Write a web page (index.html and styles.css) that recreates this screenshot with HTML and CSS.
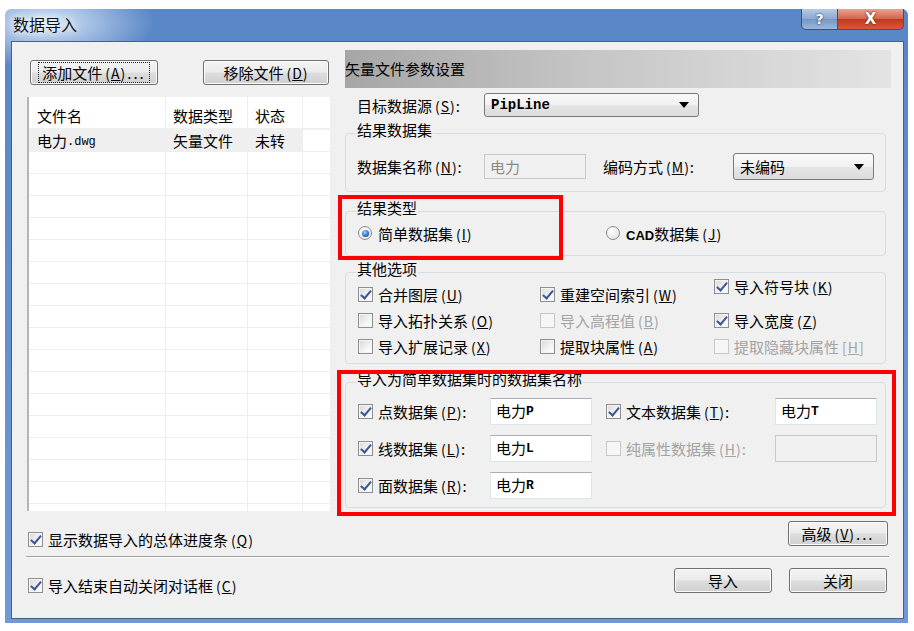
FILE: index.html
```html
<!DOCTYPE html>
<html lang="zh-CN">
    <head>
        <meta charset="UTF-8">
        <meta name="viewport" content="width=device-width, initial-scale=1.0">
        <title>数据导入</title>

        <link rel="stylesheet" href="styles.css">
    </head>
    <body>

        <div class="window">
            <div class="titlebar">
                <span class="title">数据导入</span>
                <div class="caption-btns">
                    <span class="cap-btn help">?</span>
                    <span class="cap-btn close">X</span>
                </div>
            </div>

            <div class="client">
                <div class="top">

                    <!-- file list -->
                    <div class="left-col">
                        <div class="file-btns">
                            <button class="btn add"><span class="focus-rect">添加文件<span class="mn">(<u>A</u>)</span><span class="dots">...</span></span></button>
                            <button class="btn remove">移除文件<span class="mn">(<u>D</u>)</span></button>
                        </div>

                        <div class="file-list">
                            <div class="row head"><span class="c1">文件名</span><span class="c2">数据类型</span><span class="c3">状态</span><span class="c4"></span></div>
                            <div class="row sel"><span class="c1">电力<span class="ext">.dwg</span></span><span class="c2">矢量文件</span><span class="c3">未转</span><span class="c4"></span></div>
                            <div class="row"><span class="c1"></span><span class="c2"></span><span class="c3"></span><span class="c4"></span></div>
                            <div class="row"><span class="c1"></span><span class="c2"></span><span class="c3"></span><span class="c4"></span></div>
                            <div class="row"><span class="c1"></span><span class="c2"></span><span class="c3"></span><span class="c4"></span></div>
                            <div class="row"><span class="c1"></span><span class="c2"></span><span class="c3"></span><span class="c4"></span></div>
                            <div class="row"><span class="c1"></span><span class="c2"></span><span class="c3"></span><span class="c4"></span></div>
                            <div class="row"><span class="c1"></span><span class="c2"></span><span class="c3"></span><span class="c4"></span></div>
                            <div class="row"><span class="c1"></span><span class="c2"></span><span class="c3"></span><span class="c4"></span></div>
                            <div class="row"><span class="c1"></span><span class="c2"></span><span class="c3"></span><span class="c4"></span></div>
                            <div class="row"><span class="c1"></span><span class="c2"></span><span class="c3"></span><span class="c4"></span></div>
                            <div class="row"><span class="c1"></span><span class="c2"></span><span class="c3"></span><span class="c4"></span></div>
                            <div class="row"><span class="c1"></span><span class="c2"></span><span class="c3"></span><span class="c4"></span></div>
                            <div class="row"><span class="c1"></span><span class="c2"></span><span class="c3"></span><span class="c4"></span></div>
                            <div class="row"><span class="c1"></span><span class="c2"></span><span class="c3"></span><span class="c4"></span></div>
                            <div class="row"><span class="c1"></span><span class="c2"></span><span class="c3"></span><span class="c4"></span></div>
                            <div class="row"><span class="c1"></span><span class="c2"></span><span class="c3"></span><span class="c4"></span></div>
                            <div class="row"><span class="c1"></span><span class="c2"></span><span class="c3"></span><span class="c4"></span></div>
                            <div class="row"><span class="c1"></span><span class="c2"></span><span class="c3"></span><span class="c4"></span></div>
                        </div>
                    </div>

                    <!-- settings -->
                    <div class="right-col">
                        <div class="band">矢量文件参数设置</div>

                        <div class="target-row">
                            <label class="lbl w127">目标数据源<span class="mn">(<u>S</u>)</span>:</label>
                            <div class="combo target-combo"><span class="mono">PipLine</span><span class="arrow"></span></div>
                        </div>

                        <fieldset class="group g1">
                            <legend>结果数据集</legend>
                            <div class="g1-row">
                                <label class="lbl w127">数据集名称<span class="mn">(<u>N</u>)</span>:</label>
                                <div class="input disabled">电力</div>
                                <label class="lbl enc-lbl">编码方式<span class="mn">(<u>M</u>)</span>:</label>
                                <div class="combo enc-combo"><span>未编码</span><span class="arrow"></span></div>
                            </div>
                        </fieldset>

                        <fieldset class="group g2">
                            <legend>结果类型</legend>
                            <div class="radio-row">
                                <label class="opt"><span class="radio on"></span><span>简单数据集<span class="mn">(<u>I</u>)</span></span></label>
                                <label class="opt"><span class="radio"></span><span><span class="cad">CAD</span>数据集<span class="mn">(<u>J</u>)</span></span></label>
                            </div>
                        </fieldset>

                        <fieldset class="group g3">
                            <legend>其他选项</legend>
                            <div class="opt-grid">
                                <label class="opt"><span class="cb on"></span><span>合并图层<span class="mn">(<u>U</u>)</span></span></label>
                                <label class="opt"><span class="cb on"></span><span>重建空间索引<span class="mn">(<u>W</u>)</span></span></label>
                                <label class="opt raised"><span class="cb on"></span><span>导入符号块<span class="mn">(<u>K</u>)</span></span></label>
                                <label class="opt"><span class="cb"></span><span>导入拓扑关系<span class="mn">(<u>O</u>)</span></span></label>
                                <label class="opt off"><span class="cb"></span><span>导入高程值<span class="mn">(<u>B</u>)</span></span></label>
                                <label class="opt"><span class="cb on"></span><span>导入宽度<span class="mn">(<u>Z</u>)</span></span></label>
                                <label class="opt"><span class="cb"></span><span>导入扩展记录<span class="mn">(<u>X</u>)</span></span></label>
                                <label class="opt"><span class="cb"></span><span>提取块属性<span class="mn">(<u>A</u>)</span></span></label>
                                <label class="opt off"><span class="cb"></span><span>提取隐藏块属性<span class="mn">[<u>H</u>]</span></span></label>
                            </div>
                        </fieldset>

                        <fieldset class="group g4">
                            <legend>导入为简单数据集时的数据集名称</legend>
                            <div class="name-grid">
                                <label class="opt"><span class="cb on"></span><span>点数据集<span class="mn">(<u>P</u>)</span>:</span></label>
                                <div class="input">电力<span class="latin">P</span></div>
                                <label class="opt"><span class="cb on"></span><span>文本数据集<span class="mn">(<u>T</u>)</span>:</span></label>
                                <div class="input">电力<span class="latin">T</span></div>

                                <label class="opt"><span class="cb on"></span><span>线数据集<span class="mn">(<u>L</u>)</span>:</span></label>
                                <div class="input">电力<span class="latin">L</span></div>
                                <label class="opt off"><span class="cb"></span><span>纯属性数据集<span class="mn">(<u>H</u>)</span>:</span></label>
                                <div class="input disabled"></div>

                                <label class="opt"><span class="cb on"></span><span>面数据集<span class="mn">(<u>R</u>)</span>:</span></label>
                                <div class="input">电力<span class="latin">R</span></div>
                            </div>
                        </fieldset>

                        <!-- highlight marks -->
                        <div class="redbox rb1"></div>
                        <div class="redbox rb2"></div>
                    </div>
                </div>

                <div class="bottom-row first">
                    <label class="opt"><span class="cb on"></span><span>显示数据导入的总体进度条<span class="mn">(<u>Q</u>)</span></span></label>
                    <button class="btn adv">高级<span class="mn">(<u>V</u>)</span><span class="dots">...</span></button>
                </div>

                <div class="separator"></div>

                <div class="bottom-row second">
                    <label class="opt"><span class="cb on"></span><span>导入结束自动关闭对话框<span class="mn">(<u>C</u>)</span></span></label>
                    <div class="actions">
                        <button class="btn act">导入</button>
                        <button class="btn act">关闭</button>
                    </div>
                </div>
            </div>
        </div>

    </body>
</html>
```

FILE: styles.css
```css
html, body{
    margin: 0;
    padding: 0;
    background: #fff;
    font-family: "Noto Sans CJK SC", "Noto Sans", sans-serif;
    font-size: 15px;
    color: #000;
}

label{
    cursor: default;
}

/* window frame */

.window{
    box-sizing: border-box;
    width: 903px;
    height: 614px;
    margin: 9px 0 0 5px;
    padding: 0 4px 4px 6px;
    display: flex;
    flex-direction: column;
    background:
        radial-gradient(ellipse 110px 45px at 40px 14px, rgba(225,237,250,.95), rgba(225,237,250,0)),
        linear-gradient(to bottom, #5a87c7 0, #5a87c7 40px, #6f9ad6 100%);
    border-radius: 6px 6px 0 0;
}

.titlebar{
    height: 32px;
    display: flex;
    align-items: flex-start;
}

.title{
    margin: 4px 0 0 2px;
    font-size: 16px;
    line-height: 22px;
    color: #111;
    text-shadow: 0 0 6px #fff, 0 0 10px rgba(255,255,255,.8);
}

.caption-btns{
    margin-left: auto;
    display: flex;
}

.cap-btn{
    box-sizing: border-box;
    height: 21px;
    display: flex;
    justify-content: center;
    align-items: center;
    font-family: "DejaVu Sans", sans-serif;
    font-weight: bold;
    color: #fff;
    border: 1px solid #3a5479;
    border-top: none;
}

.cap-btn.help{
    width: 37px;
    font-size: 14px;
    border-radius: 0 0 0 5px;
    background: linear-gradient(to bottom, #b7cbe4, #8aa8d0 50%, #7597c4 51%, #9bb6db);
    text-shadow: 0 0 2px #2a3d5c, 0 0 1px #2a3d5c;
}

.cap-btn.close{
    width: 66px;
    font-size: 15px;
    border-left: none;
    border-radius: 0 0 5px 0;
    background: linear-gradient(to bottom, #e8a493, #d0644b 50%, #c2391d 51%, #d9583a);
    text-shadow: 0 0 2px #5a1a0c, 0 0 1px #5a1a0c;
}

.client{
    flex: 1;
    border: 1px solid #4c607e;
    background: #f0f0f0;
}

.top{
    display: flex;
    height: 473px;
}

/* left column */

.left-col{
    padding-left: 15px;
}

.file-btns{
    display: flex;
    padding-top: 18px;
}

.btn{
    box-sizing: border-box;
    height: 25px;
    padding: 0;
    font-family: "Noto Sans CJK SC", "Noto Sans", sans-serif;
    font-size: 15px;
    color: #000;
    border: 1px solid #707070;
    border-radius: 3px;
    background: linear-gradient(to bottom, #f4f4f4 0, #ebebeb 48%, #dddddd 52%, #d0d0d0 100%);
    box-shadow: inset 0 0 0 1px #fbfbfb;
    display: flex;
    justify-content: center;
    align-items: center;
}

.btn.add{
    width: 128px;
    margin-left: 3px;
}

.focus-rect{
    display: flex;
    align-items: center;
    height: 19px;
    padding: 0 3px;
    outline: 1px dotted #222;
}

.btn.remove{
    width: 126px;
    margin-left: 45px;
}

.mn{
    font-size: 14px;
    letter-spacing: 1px;
    margin-left: 3px;
}

.dots{
    letter-spacing: 2px;
    margin-left: 1px;
}

.file-list{
    box-sizing: border-box;
    width: 303px;
    height: 414px;
    margin-top: 12px;
    background: #fff;
    border-left: 2px solid #b5b5b5;
    overflow: hidden;
}

.row{
    display: flex;
    height: 22px;
}

.row span{
    box-sizing: border-box;
    display: flex;
    align-items: center;
    white-space: nowrap;
    border-right: 1px solid #eeeeee;
    border-bottom: 1px solid #eeeeee;
}

.row.head{
    height: 33px;
}

.row.head span{
    border-bottom: 2px solid #f0f0f0;
    padding-top: 5px;
}

.c1{
    width: 137px;
    padding-left: 8px;
}

.c2{
    width: 82px;
    padding-left: 7px;
}

.c3{
    width: 55px;
    padding-left: 7px;
}

.c4{
    flex: 1;
    border-right: none !important;
}

.row.sel .c1,
.row.sel .c2,
.row.sel .c3{
    background: #efefef;
}

.ext{
    font-family: "Liberation Mono", monospace;
    font-size: 12px;
    border: none !important;
    padding-top: 2px;
}

/* right column */

.right-col{
    position: relative;
    width: 546px;
    margin-left: 15px;
    padding-top: 8px;
}

.band{
    height: 38px;
    line-height: 38px;
    background: linear-gradient(to right, #a6a6a6 0, #c6c6c6 45%, #e4e4e4 100%);
}

.target-row{
    display: flex;
    align-items: center;
    height: 24px;
    margin-top: 5px;
    padding-left: 12px;
}

.lbl{
    white-space: nowrap;
}

.w127{
    width: 127px;
    flex-shrink: 0;
}

.combo{
    box-sizing: border-box;
    display: flex;
    align-items: center;
    justify-content: space-between;
    border: 1px solid #7a7a7a;
    border-radius: 3px;
    background: linear-gradient(to bottom, #fafafa 0, #f1f1f1 50%, #e6e6e6 51%, #dcdcdc 100%);
    padding: 0 9px 0 6px;
}

.target-combo{
    width: 215px;
    height: 24px;
}

.mono{
    font-family: "Liberation Mono", monospace;
    font-weight: bold;
    font-size: 14px;
}

.arrow{
    width: 0;
    height: 0;
    border-left: 5px solid transparent;
    border-right: 5px solid transparent;
    border-top: 6px solid #000;
}

.group{
    box-sizing: border-box;
    width: 541px;
    margin: 0;
    border: 1px solid #d6dce2;
    border-radius: 4px;
    min-inline-size: 0;
}

.group legend{
    margin-left: -2px;
    padding: 0 1px 6px;
    line-height: 18px;
}

.g1{
    margin-top: 4px;
    padding: 8px 0 11px 11px;
}

.g1 legend{
    margin-left: -1px;
}

.g1-row{
    display: flex;
    align-items: center;
}

.input{
    box-sizing: border-box;
    width: 102px;
    height: 25px;
    padding: 1px 5px;
    background: #fff;
    border: 1px solid #dfe4ea;
    border-top-color: #abadb3;
    line-height: 21px;
    white-space: nowrap;
}

.input.disabled{
    background: #f0f0f0;
    color: #8a8a8a;
    border-color: #c9c9c9;
}

.enc-lbl{
    width: 130px;
    margin-left: 17px;
}

.enc-combo{
    width: 141px;
    height: 27px;
}

.g2{
    margin-top: 7px;
    padding: 0 0 12px 12px;
}

.radio-row{
    display: grid;
    grid-template-columns: 248px auto;
    height: 20px;
    align-items: center;
}

.opt{
    display: flex;
    align-items: center;
    gap: 5px;
    height: 18px;
    white-space: nowrap;
}

.opt.off{
    color: #a3a3a3;
}

.radio{
    box-sizing: border-box;
    width: 14px;
    height: 14px;
    margin-right: 1px;
    border-radius: 50%;
    border: 1px solid #8d8d8d;
    background: radial-gradient(circle at 35% 35%, #fff, #dcdcdc);
    display: flex;
    justify-content: center;
    align-items: center;
}

.radio.on::after{
    content: "";
    width: 7px;
    height: 7px;
    border-radius: 50%;
    background: radial-gradient(circle at 40% 35%, #9fd0ff, #2a6bc0 60%, #15428a);
}

.cad{
    font-family: "Liberation Sans", sans-serif;
    font-size: 13px;
    font-weight: bold;
}

.cb{
    box-sizing: border-box;
    position: relative;
    flex-shrink: 0;
    width: 15px;
    height: 15px;
    border: 1px solid #8f8f8f;
    background: linear-gradient(135deg, #d8d8d8, #f8f8f8 70%, #fff);
    box-shadow: inset 0 0 0 1px #f4f4f4;
}

.cb.on::after{
    content: "";
    position: absolute;
    left: 4px;
    top: 0;
    width: 4px;
    height: 9px;
    border-right: 2px solid #3b5795;
    border-bottom: 2px solid #3b5795;
    transform: rotate(40deg);
}

.opt.off .cb{
    border-color: #c8c8c8;
    background: #f6f6f6;
    box-shadow: none;
}

.g3{
    margin-top: 4px;
    padding: 1px 0 8px 12px;
}

.opt-grid{
    display: grid;
    grid-template-columns: 182px 174px auto;
    grid-auto-rows: 18px;
    row-gap: 8px;
}

.opt.raised{
    margin-top: -8px;
}

.g4{
    margin-top: 6px;
    padding: 4px 0 8px 12px;
}

.name-grid{
    display: grid;
    grid-template-columns: 132px 116px 169px 102px;
    grid-auto-rows: 27px;
    row-gap: 10px;
    align-items: center;
}

.name-grid .input{
    height: 27px;
}

.latin{
    font-family: "Liberation Mono", monospace;
    font-weight: bold;
    font-size: 13px;
    vertical-align: 2px;
}

.redbox{
    position: absolute;
    box-sizing: border-box;
    border: 4px solid #ff0000;
}

.rb1{
    left: -7px;
    top: 153px;
    width: 225px;
    height: 65px;
}

.rb2{
    left: -8px;
    top: 328px;
    width: 559px;
    height: 146px;
}

/* bottom */

.bottom-row{
    display: flex;
    justify-content: space-between;
    align-items: flex-end;
    height: 25px;
    padding: 0 15px 0 16px;
}

.bottom-row.first{
    margin-top: 6px;
}

.bottom-row.first .opt{
    margin-bottom: -2px;
}

.bottom-row.second{
    margin-top: 10px;
    padding-right: 16px;
}

.bottom-row.second .opt{
    margin-bottom: -1px;
}

.btn.adv{
    width: 100px;
}

.separator{
    margin: 10px 14px 0 14px;
    height: 1px;
    background: #a0a0a0;
    border-bottom: 1px solid #fff;
}

.actions{
    display: flex;
    gap: 17px;
}

.btn.act{
    width: 98px;
}
```
